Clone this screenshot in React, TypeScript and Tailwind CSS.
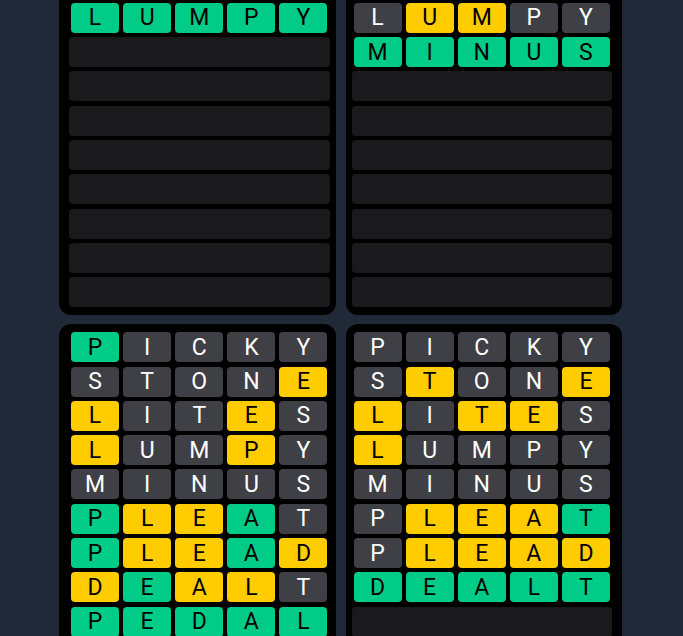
import React from 'react';

type Cell = 'green' | 'yellow' | 'gray';

const GUESSES = ['PICKY', 'STONE', 'LITES', 'LUMPY', 'MINUS', 'PLEAT', 'PLEAD', 'DEALT', 'PEDAL'];
const ANSWERS = ['LUMPY', 'MINUS', 'PEDAL', 'DEALT'];
const TOTAL_ROWS = 12;

function score(guess: string, answer: string): Cell[] {
  const res: Cell[] = Array(5).fill('gray');
  const left: Record<string, number> = {};
  for (let i = 0; i < 5; i++) {
    if (guess[i] === answer[i]) res[i] = 'green';
    else left[answer[i]] = (left[answer[i]] || 0) + 1;
  }
  for (let i = 0; i < 5; i++) {
    if (res[i] === 'green') continue;
    if (left[guess[i]]) {
      res[i] = 'yellow';
      left[guess[i]]--;
    }
  }
  return res;
}

const tileClass: Record<Cell, string> = {
  green: 'bg-[#00cc88] text-black',
  yellow: 'bg-[#ffcc00] text-black',
  gray: 'bg-[#3f3f46] text-white',
};

const Board: React.FC<{ answer: string; side: 'left' | 'right' }> = ({ answer, side }) => {
  const solvedAt = GUESSES.indexOf(answer);
  const played = solvedAt === -1 ? GUESSES : GUESSES.slice(0, solvedAt + 1);

  return (
    <div
      className={`rounded-xl bg-black pt-2 pb-2 flex flex-col gap-[4.3px] ${
        side === 'left' ? 'pl-[10px] pr-[6px]' : 'pl-[6px] pr-[10px]'
      }`}
    >
      {Array.from({ length: TOTAL_ROWS }).map((_, r) => {
        const word = played[r];
        if (!word) {
          return <div key={r} className="h-[30px] rounded bg-[#1a1a1c]" />;
        }
        const cells = score(word, answer);
        return (
          <div key={r} className="h-[30px] grid grid-cols-5">
            {word.split('').map((ch, i) => (
              <div
                key={i}
                className={`mx-[2px] rounded flex items-center justify-center text-[23px] leading-none ${tileClass[cells[i]]}`}
              >
                {ch}
              </div>
            ))}
          </div>
        );
      })}
    </div>
  );
};

export default function App() {
  return (
    <div
      className="h-screen w-full overflow-hidden bg-[#1f2937]"
      style={{ fontFamily: 'Roboto, "Liberation Sans", sans-serif' }}
    >
      {/* page is scrolled: top boards start above the fold */}
      <div className="ml-[59px] w-[563px] -mt-[108px] grid grid-cols-2 gap-x-[10px] gap-y-[9px]">
        <Board answer={ANSWERS[0]} side="left" />
        <Board answer={ANSWERS[1]} side="right" />
        <Board answer={ANSWERS[2]} side="left" />
        <Board answer={ANSWERS[3]} side="right" />
      </div>
    </div>
  );
}
